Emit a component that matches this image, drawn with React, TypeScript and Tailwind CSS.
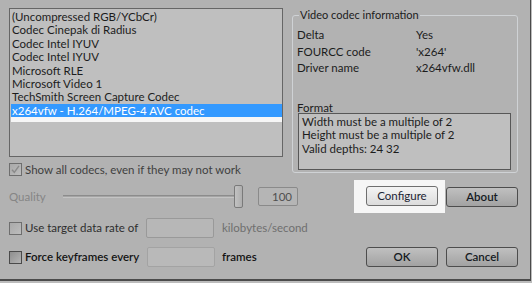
import React from "react";

const items = [
  "(Uncompressed RGB/YCbCr)",
  "Codec Cinepak di Radius",
  "Codec Intel IYUV",
  "Codec Intel IYUV",
  "Microsoft RLE",
  "Microsoft Video 1",
  "TechSmith Screen Capture Codec",
];

function CheckBox({ checked, dark }: { checked?: boolean; dark?: boolean }) {
  return (
    <div
      className={`w-[13px] h-[13px] shrink-0 border flex items-center justify-center ${
        dark
          ? "border-[#4a4a4a] bg-linear-to-br from-[#8e8e8e] to-[#b4b4b4]"
          : "border-[#6e6e6e] bg-linear-to-br from-[#a9a9a9] to-[#bdbdbd]"
      }`}
    >
      {checked && (
        <svg width="11" height="11" viewBox="0 0 11 11">
          <path d="M2 5.8 L4.3 8.3 L9 1.8" fill="none" stroke="#8a8a8a" strokeWidth="1.4" />
        </svg>
      )}
    </div>
  );
}

function Btn({ label, light }: { label: string; light?: boolean }) {
  return (
    <div
      className={`w-[72px] h-[20px] shrink-0 rounded-[3px] border flex items-center justify-center text-[11.5px] ${
        light
          ? "border-[#6f6f6f] bg-linear-to-b from-[#f4f4f4] to-[#dcdcdc] text-[#1c2433]"
          : "border-[#4d4d4d] bg-linear-to-b from-[#c0c0c0] to-[#a2a2a2] text-[#151a22] font-semibold"
      }`}
    >
      {label}
    </div>
  );
}

export default function App() {
  return (
    <div className="w-[532px] h-[283px] bg-[#bcbcbc] overflow-hidden font-['Lato',sans-serif] text-[11px] text-[#1c1c1c]">
      <div className="w-[531px] h-[281px] bg-[#b2b2b2] border-r border-b-2 border-[#4b4b4b] flex flex-col">
        {/* top block */}
        <div className="flex items-start h-[176px]">
          <div className="pl-[9px] pt-[8px] flex flex-col">
            <div className="w-[274px] h-[149px] border border-[#666] bg-[#bfbfbf] pt-[1px] overflow-hidden text-[11.5px]">
              {items.map((t, i) => (
                <div key={i} className="pl-[2px] h-[13.4px] leading-[13.4px] whitespace-nowrap">
                  {t}
                </div>
              ))}
              <div className="ml-[1px] w-[273px] bg-[#f6f6f6] pr-[1px] pb-[5px]">
                <div className="bg-[#3399ff] text-white pl-[1px] h-[13px] leading-[13px] whitespace-nowrap">
                  x264vfw - H.264/MPEG-4 AVC codec
                </div>
              </div>
            </div>
            <div className="mt-[6px] flex items-center h-[13px] gap-[3px]">
              <CheckBox checked />
              <span className="text-[#3f3f3f] text-[11.5px] leading-[13px]">Show all codecs, even if they may not work</span>
            </div>
          </div>
          <div className="ml-[9px] mt-[15px] w-[226px] h-[158px] border border-[#cfd2d5] rounded-[3px] flex flex-col">
            <div className="-mt-[8px] ml-[6px] px-[1px] w-fit bg-[#b2b2b2] leading-[14px] text-[#1c1c1c]">
              Video codec information
            </div>
            <div className="mt-[5px] pl-[4px] flex flex-col leading-[16.5px] text-[11.5px]">
              <div className="flex">
                <span className="w-[119px]">Delta</span>
                <span>Yes</span>
              </div>
              <div className="flex">
                <span className="w-[119px]">FOURCC code</span>
                <span>'x264'</span>
              </div>
              <div className="flex">
                <span className="w-[119px]">Driver name</span>
                <span>x264vfw.dll</span>
              </div>
            </div>
            <div className="mt-[24px] pl-[4px] leading-[14px] text-[11.5px]">Format</div>
            <div className="ml-[5px] mt-[-2px] w-[213px] h-[57px] border border-[#575757] bg-[#bfbfbf] pl-[3px] pt-[1px] leading-[13.5px] text-[11.5px]">
              <div>Width must be a multiple of 2</div>
              <div>Height must be a multiple of 2</div>
              <div>Valid depths: 24 32</div>
            </div>
          </div>
        </div>

        {/* quality row */}
        <div className="mt-[4px] h-[33px] flex items-center pl-[9px]">
          <span className="w-[54px] text-[#858585] text-[11.5px]">Quality</span>
          <div className="w-[180px] h-[23px] flex items-center">
            <div className="flex-1 h-[3px] border-t border-[#8c8c8c] border-b border-b-[#c4c4c4] bg-[#a4a4a4]" />
            <div className="w-[9px] h-[23px] rounded-[2px] border border-[#7a7a7a] bg-linear-to-r from-[#c2c2c2] to-[#aeaeae]" />
          </div>
          <div className="ml-[15px] w-[40px] h-[19px] rounded-[2px] border border-[#8a8a8a] bg-[#b5b5b5] flex items-center justify-end pr-[5px] text-[#505050] text-[11.5px]">
            100
          </div>
          <div className="ml-[56px] h-[33px] bg-[#f6f6f6] pl-[12px] pr-[7px] pt-[6px] pb-[7px]">
            <Btn label="Configure" light />
          </div>
          <div className="ml-[1px]">
            <Btn label="About" />
          </div>
        </div>

        {/* target data rate */}
        <div className="mt-[5px] h-[20px] flex items-center pl-[9px] text-[11.5px]">
          <CheckBox />
          <span className="ml-[3px] w-[121px] text-[#2e2e2e]">Use target data rate of</span>
          <div className="w-[68px] h-[20px] rounded-[2px] border border-[#999] bg-[#b7b7b7]" />
          <span className="ml-[8px] text-[#6f6f6f]">kilobytes/second</span>
        </div>

        {/* keyframes */}
        <div className="mt-[9px] h-[20px] flex items-center pl-[9px] text-[11.5px]">
          <CheckBox dark />
          <span className="ml-[3px] w-[122px] text-[#141414] font-semibold">Force keyframes every</span>
          <div className="w-[68px] h-[20px] rounded-[2px] border border-[#a3a3a3] bg-[#b9b9b9]" />
          <span className="ml-[7px] w-[144px] text-[#141414] font-semibold">frames</span>
          <Btn label="OK" />
          <div className="ml-[8px]">
            <Btn label="Cancel" />
          </div>
        </div>
      </div>
    </div>
  );
}
